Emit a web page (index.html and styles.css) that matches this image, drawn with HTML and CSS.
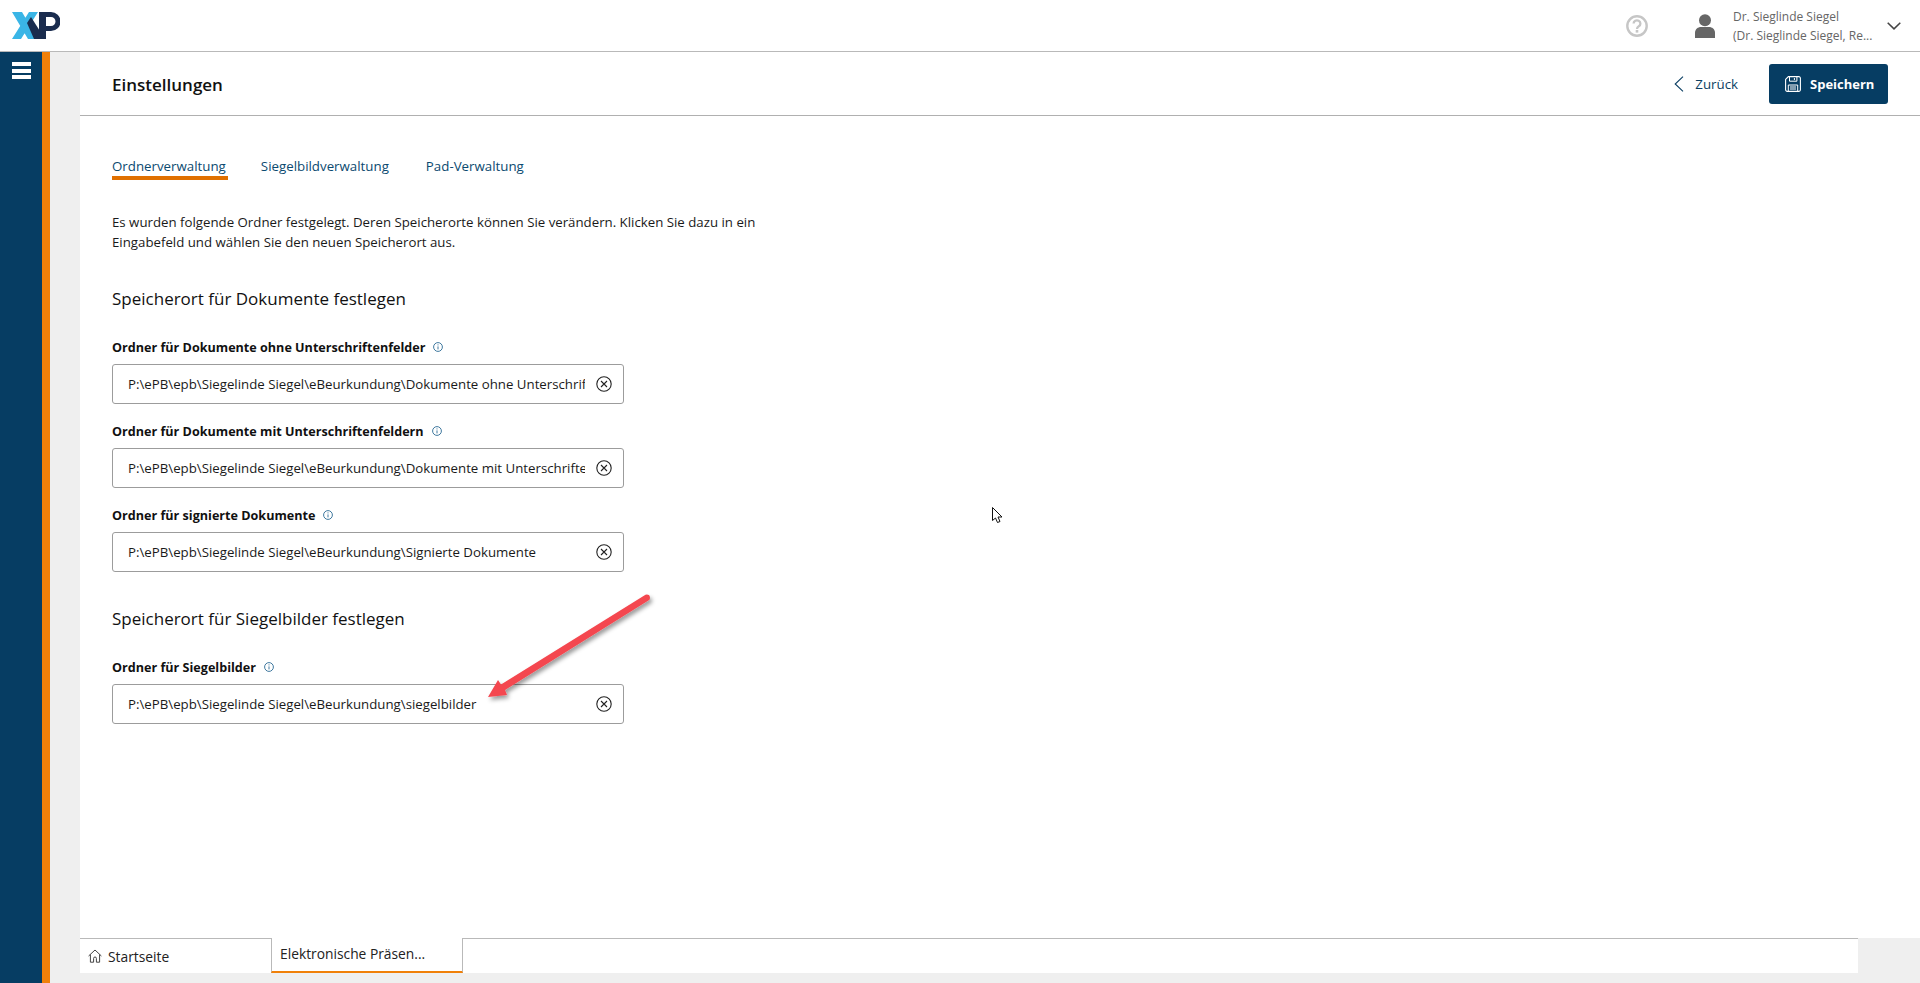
FILE: index.html
```html
<!DOCTYPE html>
<html lang="de">
<head>
<meta charset="utf-8">
<title>Einstellungen</title>
<link rel="stylesheet" href="styles.css">
</head>
<body>
<header class="topbar">
  <svg class="logo" viewBox="0 0 48 27" width="48" height="27">
    <path fill="#3ab5e6" d="M0 0h10l16 27H16zM17 0h9L9 27H0z"/>
    <path fill="#1a2c4e" d="M15 11l4-6 14 22H22z"/>
    <path fill="#1a2c4e" fill-rule="evenodd" d="M27 0h12a9.500 9.500 0 0 1 0 19h-5v8h-7zM34 5v9h5a4.500 4.500 0 0 0 0-9z"/>
  </svg>
  <div class="top-right">
    <svg class="help" viewBox="0 0 22 22" width="22" height="22"><circle cx="11" cy="11" r="9.700" fill="none" stroke="#c6c6c6" stroke-width="2.400"/><path d="M7.600 8.600a3.400 3.200 0 1 1 5.200 2.700c-1.200.8-1.800 1.300-1.800 2.700" fill="none" stroke="#c6c6c6" stroke-width="2.300"/><rect x="9.700" y="15" width="2.600" height="2.600" fill="#c6c6c6"/></svg>
    <svg class="user" viewBox="0 0 20 24" width="20" height="24"><circle cx="10" cy="6.200" r="6" fill="#666"/><path d="M0 24v-5c0-4 3-6 6-6h8c3 0 6 2 6 6v5z" fill="#666"/></svg>
    <div class="user-text"><div>Dr. Sieglinde Siegel</div><div>(Dr. Sieglinde Siegel, Re...</div></div>
    <svg class="chev" viewBox="0 0 14 8" width="14" height="8"><path d="M.7.7 7 6.900 13.300.7" fill="none" stroke="#444" stroke-width="1.500"/></svg>
  </div>
</header>
<div class="body-row">
  <nav class="sidebar">
    <div class="burger"><span></span><span></span><span></span></div>
  </nav>
  <div class="accent"></div>
  <div class="gutter"></div>
  <main class="main">
    <div class="panel">
      <div class="page-head">
        <h1>Einstellungen</h1>
        <div class="actions">
          <a class="back"><svg viewBox="0 0 10 16" width="10" height="16"><path d="M9 .7 1.200 8 9 15.300" fill="none" stroke="#0b3f63" stroke-width="1.100"/></svg>Zurück</a>
          <button class="save"><svg viewBox="0 0 16 16" width="16" height="16"><path d="M.6 3.400 3.400.6h10.400a1.600 1.600 0 0 1 1.600 1.600v11.600a1.600 1.600 0 0 1-1.600 1.600H2.200a1.600 1.600 0 0 1-1.600-1.600z" fill="none" stroke="#fff" stroke-width="1.100"/><path d="M4.500.8v4.400h7.400V.8M9.400 2v2M3.300 15V9h9.400v6M5 11h6M5 13h6" fill="none" stroke="#fff" stroke-width="1"/></svg>Speichern</button>
        </div>
      </div>
      <div class="content">
        <div class="tabs">
          <a class="tab active">Ordnerverwaltung</a>
          <a class="tab">Siegelbildverwaltung</a>
          <a class="tab">Pad-Verwaltung</a>
        </div>
        <p class="intro">Es wurden folgende Ordner festgelegt. Deren Speicherorte können Sie verändern. Klicken Sie dazu in ein Eingabefeld und wählen Sie den neuen Speicherort aus.</p>
        <h2>Speicherort für Dokumente festlegen</h2>
        <div class="field">
          <label>Ordner für Dokumente ohne Unterschriftenfelder<svg class="info" viewBox="0 0 10 10" width="10" height="10"><circle cx="5" cy="5" r="4.400"/><path d="M5 4.400v3M5 2.400v1"/></svg></label>
          <div class="box"><span>P:\ePB\epb\Siegelinde Siegel\eBeurkundung\Dokumente ohne Unterschriftenfelder</span><svg class="clear" viewBox="0 0 16 16" width="16" height="16"><circle cx="8" cy="8" r="7.200"/><path d="m5 5 6 6M11 5l-6 6"/></svg></div>
        </div>
        <div class="field">
          <label>Ordner für Dokumente mit Unterschriftenfeldern<svg class="info" viewBox="0 0 10 10" width="10" height="10"><circle cx="5" cy="5" r="4.400"/><path d="M5 4.400v3M5 2.400v1"/></svg></label>
          <div class="box"><span>P:\ePB\epb\Siegelinde Siegel\eBeurkundung\Dokumente mit Unterschriftenfeldern</span><svg class="clear" viewBox="0 0 16 16" width="16" height="16"><circle cx="8" cy="8" r="7.200"/><path d="m5 5 6 6M11 5l-6 6"/></svg></div>
        </div>
        <div class="field">
          <label>Ordner für signierte Dokumente<svg class="info" viewBox="0 0 10 10" width="10" height="10"><circle cx="5" cy="5" r="4.400"/><path d="M5 4.400v3M5 2.400v1"/></svg></label>
          <div class="box"><span>P:\ePB\epb\Siegelinde Siegel\eBeurkundung\Signierte Dokumente</span><svg class="clear" viewBox="0 0 16 16" width="16" height="16"><circle cx="8" cy="8" r="7.200"/><path d="m5 5 6 6M11 5l-6 6"/></svg></div>
        </div>
        <h2 class="second">Speicherort für Siegelbilder festlegen</h2>
        <div class="field">
          <label>Ordner für Siegelbilder<svg class="info" viewBox="0 0 10 10" width="10" height="10"><circle cx="5" cy="5" r="4.400"/><path d="M5 4.400v3M5 2.400v1"/></svg></label>
          <div class="box"><span>P:\ePB\epb\Siegelinde Siegel\eBeurkundung\siegelbilder</span><svg class="clear" viewBox="0 0 16 16" width="16" height="16"><circle cx="8" cy="8" r="7.200"/><path d="m5 5 6 6M11 5l-6 6"/></svg></div>
        </div>
      </div>
    </div>
    <div class="dock">
      <div class="dock-tab home"><svg viewBox="0 0 14 14" width="14" height="14"><path d="M.6 7 7 1l6.400 6M2.400 5.600v7.600h3.200V9.400a1.400 1.400 0 0 1 2.800 0v3.800h3.200V5.600" fill="none" stroke="#444" stroke-width="1"/></svg>Startseite</div>
      <div class="dock-tab current">Elektronische Präsen...</div>
    </div>
  </main>
</div>
<svg class="arrow" viewBox="0 0 1920 983" width="1920" height="983">
  <defs><filter id="sh" x="-20%" y="-20%" width="140%" height="140%"><feDropShadow dx="2" dy="3" stdDeviation="2" flood-color="#000" flood-opacity=".4"/></filter></defs>
  <path filter="url(#sh)" fill="#f4474f" d="M645.500 594.700Q650 594 650 598q0 2-2 2.800L505 690l2 5-19 2 10-17 3 4.500z"/>
</svg>
<svg class="cursor" viewBox="0 0 12 17" width="12" height="17"><path d="M.5.5v13l3-2.500 2 4.500 2.500-1-2-4.500h4z" fill="#fff" stroke="#111" stroke-width="1"/></svg>
</body>
</html>
```
FILE: styles.css
```css
* { box-sizing: border-box; }
html, body { margin: 0; height: 983px; overflow: hidden; }
body { position: relative; display: flex; flex-direction: column; font-family: "Open Sans", "Liberation Sans", sans-serif; font-size: 13.25px; color: #1a1a1a; background: #efefef; }

.topbar { height: 52px; flex: none; display: flex; align-items: center; justify-content: space-between; background: #fff; border-bottom: 1px solid #b9b9b9; padding: 0 19px 0 12px; }
.logo { display: block; margin-bottom: 1px; }
.top-right { display: flex; align-items: center; }
.help { margin-right: 47px; }
.user { margin-right: 18px; }
.user-text { width: 140px; font-size: 12px; line-height: 19px; color: #666; white-space: nowrap; }
.chev { margin-left: 14px; }

.body-row { flex: 1; display: flex; min-height: 0; }
.sidebar { width: 42px; flex: none; background: #063d63; padding: 10px 12px 0; }
.burger { display: flex; flex-direction: column; gap: 2.5px; width: 19px; }
.burger span { display: block; height: 4px; background: #fff; }
.accent { width: 8px; flex: none; background: #f08009; }
.gutter { width: 30px; flex: none; background: #efefef; }

.main { flex: 1; display: flex; flex-direction: column; min-width: 0; }
.panel { flex: 1; background: #fff; min-height: 0; }

.page-head { height: 64px; display: flex; align-items: center; justify-content: space-between; padding: 0 32px; border-bottom: 1px solid #b0b0b0; }
h1 { margin: 2px 0 0; font-size: 17px; font-weight: 600; color: #111; }
.actions { display: flex; align-items: center; }
.back { display: flex; align-items: center; gap: 11px; font-size: 13.3px; color: #0b3f63; margin-right: 31px; }
.save { display: flex; align-items: center; gap: 9px; height: 40px; width: 119px; padding: 0 0 0 16px; border: 0; border-radius: 3px; background: #063d63; color: #fff; font: 700 13px "Open Sans", sans-serif; }

.content { padding: 0 32px; }
.tabs { display: flex; gap: 33px; padding-top: 40px; }
.tab { display: block; height: 24px; padding-right: 4px; line-height: 20px; font-size: 13.3px; color: #0b4a70; }
.tab.active { padding-right: 2px; border-bottom: 4px solid #e07000; }
.intro { margin: 33px 0 0; width: 660px; line-height: 19.5px; }
h2 { margin: 35px 0 27px; font-size: 17px; font-weight: 400; line-height: 24px; color: #111; }
h2.second { margin-top: 35px; }
.field { margin-top: 18px; }
h2 + .field { margin-top: 0; }
.field label { display: flex; align-items: center; gap: 8px; height: 18px; font-weight: 700; font-size: 12.6px; color: #111; margin-bottom: 8px; }
.info { fill: none; stroke: #2a6a94; stroke-width: .9; }
.box { display: flex; align-items: center; width: 512px; height: 40px; padding: 0 11px 0 15px; border: 1px solid #9c9c9c; border-radius: 3px; }
.box span { flex: 1; overflow: hidden; white-space: nowrap; min-width: 0; }
.clear { margin-left: 11px; flex: none; fill: none; stroke: #222; stroke-width: 1.1; }

.dock { height: 35px; flex: none; width: 1778px; display: flex; background: #fff; border-top: 1px solid #b9b9b9; margin-bottom: 10px; font-size: 13.8px; color: #222; }
.dock-tab { display: flex; align-items: center; height: 100%; white-space: nowrap; }
.dock-tab.home { width: 191px; gap: 6px; padding-left: 8px; }
.dock-tab.current { width: 192px; padding: 0 0 2px 8px; border-left: 1px solid #b9b9b9; border-right: 1px solid #b9b9b9; border-bottom: 2px solid #f08009; margin-top: -1px; height: calc(100% + 1px); background: #fff; }

.arrow { position: absolute; left: 0; top: 0; pointer-events: none; }
.cursor { position: absolute; left: 992px; top: 507px; }
```
